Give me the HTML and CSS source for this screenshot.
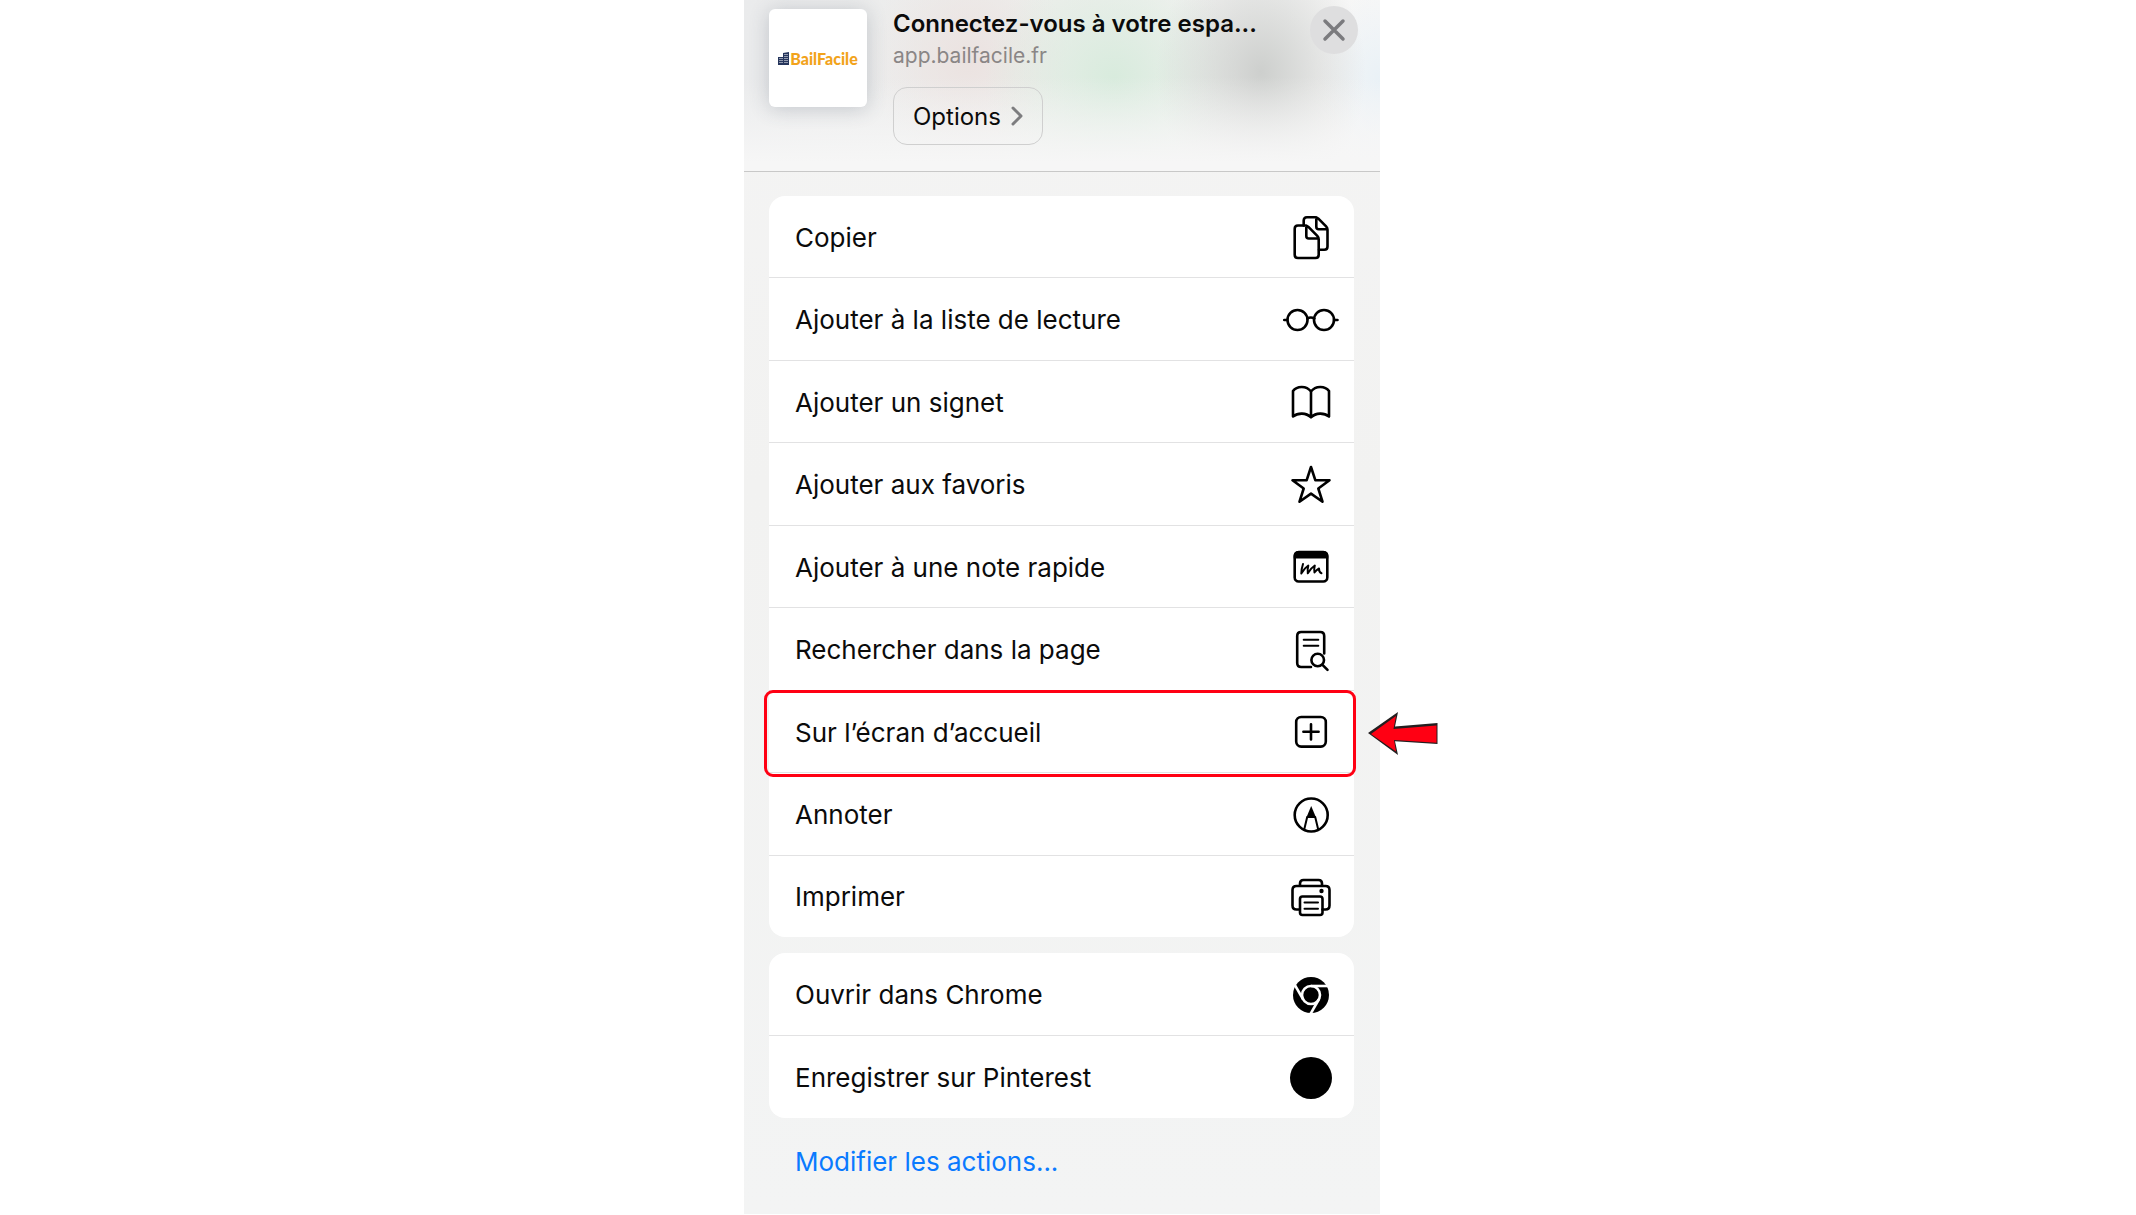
FILE: index.html
```html
<!DOCTYPE html>
<html lang="fr">
<head>
    <meta charset="utf-8">
    <meta name="viewport" content="width=device-width, initial-scale=1">
    <title>Connectez-vous à votre espace</title>
    <link rel="stylesheet" href="styles.css">
</head>
<body>
<div class="sheet">
    <header class="header">
        <div class="appIcon">
            <svg class="appIcon_building" viewBox="0 0 11 13" aria-hidden="true">
                <path fill="#25355c" d="M0 5h5V1l6-1v13H0z"/>
                <path stroke="#fff" stroke-width="1" stroke-dasharray="1 1" d="M2 6v6M4 6v6M7 2v9M9 2v9"/>
            </svg>
            <span class="appIcon_name">BailFacile</span>
        </div>
        <div class="info">
            <h1 class="info_title">Connectez-vous à votre espa...</h1>
            <span class="info_url">app.bailfacile.fr</span>
            <button class="options" type="button">
                Options
                <svg class="options_chevron" viewBox="0 0 12 20" aria-hidden="true">
                    <path d="M2 2l8 8-8 8"/>
                </svg>
            </button>
        </div>
        <button class="close" type="button" aria-label="Fermer">
            <svg viewBox="0 0 48 48" aria-hidden="true">
                <path d="M15 15l18 18M33 15L15 33"/>
            </svg>
        </button>
    </header>

    <main class="content">
        <ul class="list list_safari">
            <li class="list_item">
                <button class="action" type="button">Copier
                    <svg class="icon" viewBox="0 0 56 56" aria-hidden="true">
                        <path d="M20.700 16.500v-5q0-3.200 3.200-3.200H32q2 0 3.400 1.400l7.700 7.700q1.400 1.400 1.400 3.400v16.700q0 3.200-3.200 3.200H36M33.300 8.500v9.300q0 2.500 2.500 2.500h8.500"/>
                        <path d="M14.900 16.500H22q2 0 3.400 1.400l8.900 8.900q1.400 1.400 1.400 3.400v15.600q0 3.200-3.200 3.200H14.900q-3.200 0-3.200-3.200V19.700q0-3.200 3.200-3.200zM23.300 16.700v10.300q0 2.500 2.500 2.500h9.700"/>
                    </svg>
                </button>
            </li>
            <li class="list_item">
                <button class="action" type="button">Ajouter à la liste de lecture
                    <svg class="icon" viewBox="0 0 56 56" aria-hidden="true">
                        <circle cx="14.500" cy="28" r="10"/>
                        <circle cx="41" cy="28" r="10"/>
                        <path d="M24.300 26.500q3.500-2 7 0M1.200 28h3M51 28h3.500"/>
                    </svg>
                </button>
            </li>
            <li class="list_item">
                <button class="action" type="button">Ajouter un signet
                    <svg class="icon" viewBox="0 0 56 56" aria-hidden="true">
                        <path d="M28 17.500C23.500 11.500 14 11.500 10 17v25.500c5-4 13-4 18 .8 5-4.800 13-4.800 18-.8V17c-4-5.500-13.500-5.500-18 .5zM28 17.500v25.500"/>
                    </svg>
                </button>
            </li>
            <li class="list_item">
                <button class="action" type="button">Ajouter aux favoris
                    <svg class="icon" viewBox="0 0 56 56" aria-hidden="true">
                        <path d="M28 10l4.300 13.200h14.200L35.300 31.500l4.200 13.200L28 36.600l-11.500 8.100 4.200-13.200L9.500 23.200h14.200z"/>
                    </svg>
                </button>
            </li>
            <li class="list_item">
                <button class="action" type="button">Ajouter à une note rapide
                    <svg class="icon" viewBox="0 0 56 56" aria-hidden="true">
                        <rect x="11.700" y="13" width="32.600" height="29.500" rx="4"/>
                        <path class="icon_fill" d="M10.700 19.500V17q0-5 5-5h24.600q5 0 5 5v2.500z"/>
                        <path class="icon_thin" d="M20 25q-1.500 4.500-1.700 9.500 3.200-5.500 7-8-1 4-.5 7.800 3-5.200 7-7.800-1 3.500-.3 7 2.300-3 4.500-4 0 4 2.500 4.800"/>
                    </svg>
                </button>
            </li>
            <li class="list_item">
                <button class="action" type="button">Rechercher dans la page
                    <svg class="icon" viewBox="0 0 56 56" aria-hidden="true">
                        <path d="M28 45h-9.800q-4 0-4-4V14q0-4 4-4h19q4 0 4 4v17.500"/>
                        <path class="icon_thin" d="M20.700 17.700h14.600M20.700 23.700h14.600"/>
                        <circle cx="34.700" cy="38" r="6.300"/>
                        <path d="M39.500 42.800l5 5"/>
                    </svg>
                </button>
            </li>
            <li class="list_item list_item-marked">
                <button class="action" type="button">Sur l’écran d’accueil
                    <svg class="icon" viewBox="0 0 56 56" aria-hidden="true">
                        <rect x="13.200" y="13" width="29.600" height="29.600" rx="5"/>
                        <path d="M28 20.200v15.200M20.400 27.800h15.200"/>
                    </svg>
                </button>
                <svg class="pointer" viewBox="0 0 70 44" aria-hidden="true">
                    <path fill="#231f20" d="M0 21L30 0l-3 14.500L69.500 11v21L27 29.300 30 43z"/>
                    <path fill="#ff0013" d="M3 22L28 4l-2.500 13L68.500 13.500v17.200L26 28l2 11.500z"/>
                </svg>
            </li>
            <li class="list_item">
                <button class="action" type="button">Annoter
                    <svg class="icon" viewBox="0 0 56 56" aria-hidden="true">
                        <circle cx="28.200" cy="28" r="16.500"/>
                        <path class="icon_thin" d="M21.200 42.500l3-12.500h8l3 12.500"/>
                        <path class="icon_fill" d="M28.200 19l4.800 11.500h-9.600z"/>
                    </svg>
                </button>
            </li>
            <li class="list_item">
                <button class="action" type="button">Imprimer
                    <svg class="icon" viewBox="0 0 56 56" aria-hidden="true">
                        <path d="M17 16.500v-2q0-3.500 3.500-3.500h15q3.500 0 3.500 3.500v2M16.500 40.500h-3q-4 0-4-4V21q0-4 4-4h29q4 0 4 4v15.500q0 4-4 4h-3"/>
                        <rect x="17" y="27.500" width="22.500" height="18.500" rx="2.500"/>
                        <path class="icon_thin" d="M21.500 33.500h13.500M21.500 39.700h13.500"/>
                        <circle class="icon_fill" cx="38.500" cy="22" r="2.200"/>
                    </svg>
                </button>
            </li>
        </ul>

        <ul class="list list_apps">
            <li class="list_item">
                <button class="action" type="button">Ouvrir dans Chrome
                    <svg class="icon" viewBox="0 0 56 56" aria-hidden="true">
                        <circle class="icon_fill" cx="28" cy="28" r="18"/>
                        <g class="icon_cut">
                            <circle cx="28" cy="28" r="9"/>
                            <path d="M28 19h18"/>
                            <path d="M28 19h18" transform="rotate(120 28 28)"/>
                            <path d="M28 19h18" transform="rotate(240 28 28)"/>
                        </g>
                    </svg>
                </button>
            </li>
            <li class="list_item">
                <button class="action" type="button">Enregistrer sur Pinterest
                    <svg class="icon" viewBox="0 0 56 56" aria-hidden="true">
                        <circle class="icon_fill" cx="28" cy="28" r="21"/>
                    </svg>
                </button>
            </li>
        </ul>

        <a class="edit" href="#">Modifier les actions...</a>
    </main>
</div>
</body>
</html>
```

FILE: styles.css
```css
* {
    box-sizing: border-box;
}

body {
    margin: 0;
    padding: 0 12px 1px 0;
    min-height: 100vh;
    display: flex;
    justify-content: center;
    background: #fff;
    color: #0b0b0b;
    font-family: Inter, "Liberation Sans", sans-serif;
    font-size: 26px;
}

button {
    font: inherit;
    color: inherit;
    cursor: pointer;
}

.sheet {
    display: flex;
    flex-direction: column;
    width: 100%;
    max-width: 636px;
    background: linear-gradient(#f4f4f4, #f2f2f1 40%, #f3f4f4);
}

.header {
    display: flex;
    align-items: flex-start;
    padding: 9px 22px 26px 25px;
    border-bottom: 1px solid #c8c8c8;
    background:
        linear-gradient(rgba(246, 246, 246, 0) 45%, #f6f6f6 95%),
        radial-gradient(ellipse 105px 130px at 517px 72px, #cdcfcd, rgba(205, 207, 205, 0)),
        radial-gradient(ellipse 130px 130px at 370px 78px, #d8ebdd, rgba(216, 235, 221, 0)),
        radial-gradient(ellipse 100px 110px at 225px 60px, #ebe2e0, rgba(235, 226, 224, 0)),
        radial-gradient(ellipse 60px 90px at 636px 80px, #e9f1f6, rgba(233, 241, 246, 0)),
        linear-gradient(90deg, #eaebec, #efefed 50%, #f7f7f7);
}

.appIcon {
    display: flex;
    align-items: center;
    justify-content: center;
    gap: 1px;
    flex-shrink: 0;
    width: 98px;
    height: 98px;
    margin-right: 26px;
    border-radius: 6px;
    background: #fff;
    box-shadow: 0 2px 20px rgba(60, 70, 90, 0.24);
}

.appIcon_building {
    width: 11px;
    height: 13px;
}

.appIcon_name {
    color: #f2a31b;
    font-family: Lato, sans-serif;
    font-size: 16px;
    font-weight: 900;
}

.info {
    display: flex;
    flex-direction: column;
    align-items: flex-start;
    flex-grow: 1;
    min-width: 1px;
}

.info_title {
    margin: 0;
    font-size: 24px;
    font-weight: 600;
    line-height: 30px;
}

.info_url {
    margin-bottom: 14px;
    color: #8a8686;
    font-size: 21px;
    line-height: 34px;
}

.options {
    display: flex;
    align-items: center;
    gap: 10px;
    height: 58px;
    padding: 0 19px;
    border: 1px solid #cfcfcf;
    border-radius: 14px;
    background: none;
    font-size: 24px;
}

.options_chevron {
    width: 12px;
    height: 20px;
    fill: none;
    stroke: #7d7d7f;
    stroke-width: 3;
    stroke-linecap: round;
    stroke-linejoin: round;
}

.close {
    flex-shrink: 0;
    width: 48px;
    height: 48px;
    margin-top: -3px;
    padding: 0;
    border: none;
    border-radius: 50%;
    background: #dededf;
}

.close svg {
    display: block;
    stroke: #7b7b7e;
    stroke-width: 3.5;
    stroke-linecap: round;
}

.content {
    display: flex;
    flex-direction: column;
    flex-grow: 1;
    padding: 24px 26px 8px 25px;
}

.list {
    display: flex;
    flex-direction: column;
    margin: 0 0 16px;
    padding: 0;
    list-style: none;
    border-radius: 16px;
    background: #fff;
}

/* rows of both lists share the free height equally */
.list_safari {
    flex: 9 0 auto;
}

.list_apps {
    flex: 2 0 auto;
    margin-bottom: 0;
}

.list_item {
    display: flex;
    flex: 1 0 0;
    min-height: 60px;
    position: relative;
}

.list_item + .list_item {
    border-top: 1px solid #e2e2e3;
}

.list_item-marked:after {
    content: '';
    position: absolute;
    inset: -1px -2px -5px -5px;
    border: 3px solid #ff0013;
    border-radius: 9px;
    pointer-events: none;
    z-index: 10;
}

.action {
    display: flex;
    align-items: center;
    justify-content: space-between;
    flex-grow: 1;
    padding: 1px 15px 0 26px;
    border: none;
    background: none;
    text-align: left;
}

.icon {
    flex-shrink: 0;
    width: 56px;
    height: 56px;
    fill: none;
    stroke: #000;
    stroke-width: 2.6;
    stroke-linecap: round;
    stroke-linejoin: round;
}

.icon_thin {
    stroke-width: 2;
}

.icon_fill {
    fill: #000;
    stroke: none;
}

.icon_cut {
    stroke: #fff;
    stroke-width: 2.6;
    stroke-linecap: butt;
}

.pointer {
    position: absolute;
    left: calc(100% + 14px);
    top: 21px;
    width: 70px;
    height: 44px;
}

.edit {
    align-self: flex-start;
    padding-left: 26px;
    color: #0a7aff;
    line-height: 88px;
    text-decoration: none;
}
```
